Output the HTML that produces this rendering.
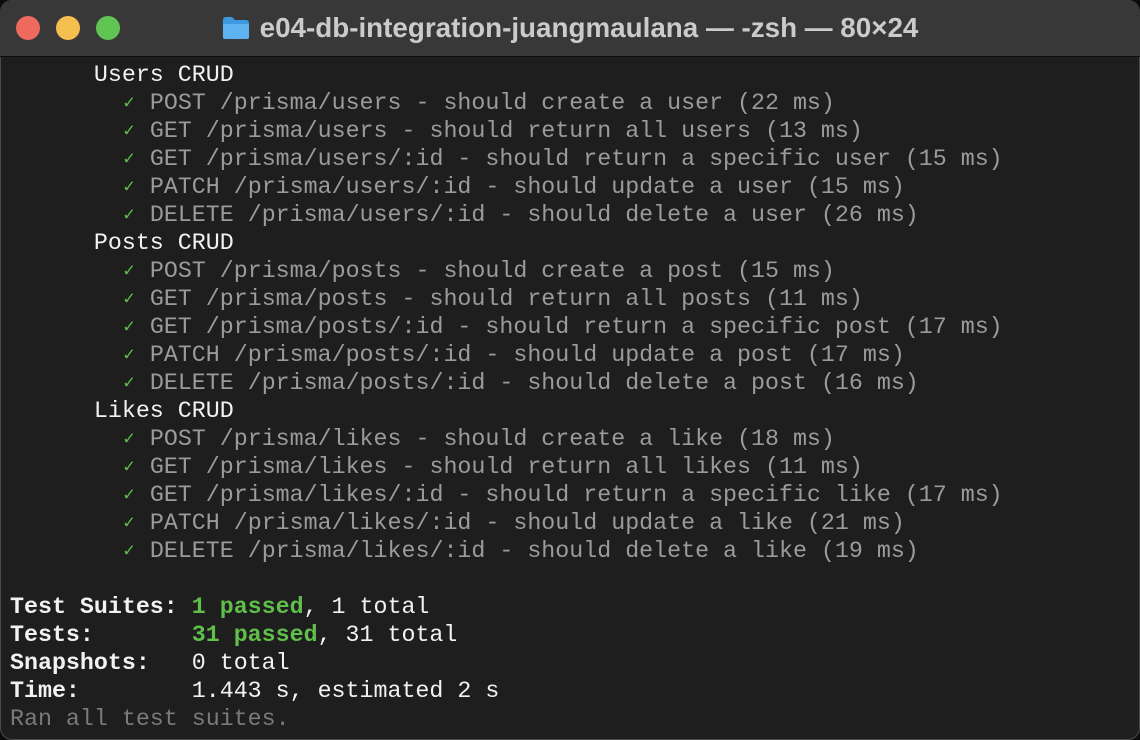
<!DOCTYPE html>
<html><head><meta charset="utf-8"><style>
html,body{margin:0;padding:0;background:#0b0b0b;width:1140px;height:740px;overflow:hidden}
.win{position:absolute;left:0;top:0;width:1140px;height:740px;border-radius:12px;background:#1e1e1e;overflow:hidden;box-shadow:inset 0 0 0 1px #4a4a4a}
.bar{position:absolute;left:0;top:0;width:1140px;height:56px;background:#383838;border-bottom:1px solid #0e0e0e}
.dot{position:absolute;top:16px;width:24px;height:24px;border-radius:50%}
.title{position:absolute;top:0;left:0;width:1140px;height:56px;display:flex;align-items:center;justify-content:center;color:#cbcbcb;font:bold 27.8px "Liberation Sans",sans-serif;white-space:nowrap}
.title svg{margin-right:10px;display:block}
pre{position:absolute;left:10px;top:61px;margin:0;font-family:"Liberation Mono","DejaVu Sans Mono",monospace;font-size:23.3px;line-height:28px;color:#9b9b9b;letter-spacing:0}
.w{color:#f2f2f2}
.b{color:#f2f2f2;font-weight:bold}
.g{color:#5fbf4a;font-weight:bold}
.c{color:#5fbf4a;display:inline-block;transform:scale(0.8);font-weight:bold}
.r{color:#7a7a7a}
</style></head><body>
<div class="win">
<div class="bar">
<div class="dot" style="left:16px;background:#ee6a5f"></div>
<div class="dot" style="left:56px;background:#f5bf4f"></div>
<div class="dot" style="left:96px;background:#61c554"></div>
<div class="title"><svg width="28" height="24" viewBox="0 0 28 24"><path d="M1 4 Q1 1 4 1 H10 L13 4 H24 Q27 4 27 7 V21 Q27 23 25 23 H3 Q1 23 1 21 Z" fill="#3d9ae0"/><path d="M1 8 H27 V21 Q27 23 25 23 H3 Q1 23 1 21 Z" fill="#5cb3f0"/></svg><span>e04-db-integration-juangmaulana — -zsh — 80×24</span></div>
</div>
<pre><span class="w">      Users CRUD</span>
        <span class="c">✓</span> POST /prisma/users - should create a user (22 ms)
        <span class="c">✓</span> GET /prisma/users - should return all users (13 ms)
        <span class="c">✓</span> GET /prisma/users/:id - should return a specific user (15 ms)
        <span class="c">✓</span> PATCH /prisma/users/:id - should update a user (15 ms)
        <span class="c">✓</span> DELETE /prisma/users/:id - should delete a user (26 ms)
<span class="w">      Posts CRUD</span>
        <span class="c">✓</span> POST /prisma/posts - should create a post (15 ms)
        <span class="c">✓</span> GET /prisma/posts - should return all posts (11 ms)
        <span class="c">✓</span> GET /prisma/posts/:id - should return a specific post (17 ms)
        <span class="c">✓</span> PATCH /prisma/posts/:id - should update a post (17 ms)
        <span class="c">✓</span> DELETE /prisma/posts/:id - should delete a post (16 ms)
<span class="w">      Likes CRUD</span>
        <span class="c">✓</span> POST /prisma/likes - should create a like (18 ms)
        <span class="c">✓</span> GET /prisma/likes - should return all likes (11 ms)
        <span class="c">✓</span> GET /prisma/likes/:id - should return a specific like (17 ms)
        <span class="c">✓</span> PATCH /prisma/likes/:id - should update a like (21 ms)
        <span class="c">✓</span> DELETE /prisma/likes/:id - should delete a like (19 ms)

<span class="b">Test Suites: </span><span class="g">1 passed</span><span class="w">, 1 total</span>
<span class="b">Tests:       </span><span class="g">31 passed</span><span class="w">, 31 total</span>
<span class="b">Snapshots:   </span><span class="w">0 total</span>
<span class="b">Time:        </span><span class="w">1.443 s, estimated 2 s</span>
<span class="r">Ran all test suites.</span></pre>
</div>
</body></html>
